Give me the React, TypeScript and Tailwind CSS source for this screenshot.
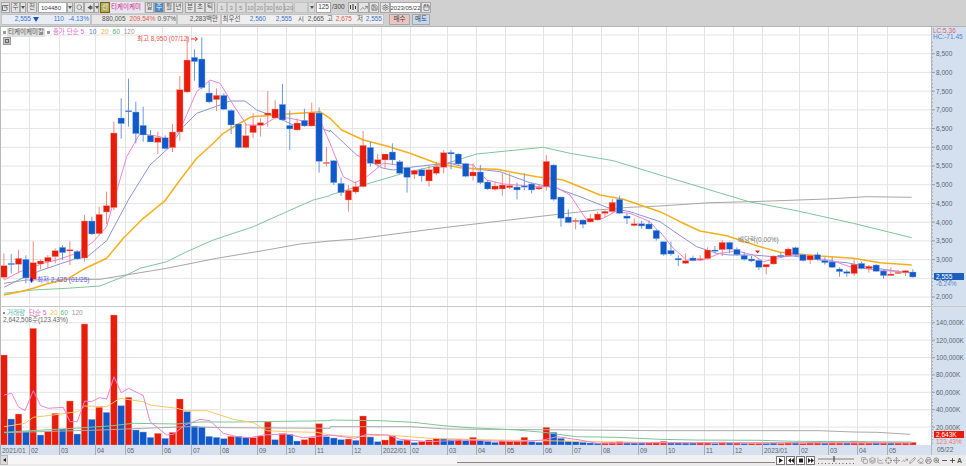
import React from "react";
import { Search, Save, Settings, Calendar, Copy, Layers, LineChart, Crosshair, Pencil, Minus, Plus, ZoomIn, Printer, Move, TrendingUp, Eraser } from "lucide-react";

type P = [number, number];
const z3 = (a: P[]): P[] => a.map(([x, y]) => [x / 3, 30 + y / 3]);
const z4 = (a: P[]): P[] => a.map(([x, y]) => [330 + x / 3, 130 + y / 3]);
const z5 = (a: P[]): P[] => a.map(([x, y]) => [660 + x / 3, 190 + y / 3]);
const z6 = (a: P[]): P[] => a.map(([x, y]) => [x / 3, 300 + y / 3]);
const z7 = (a: P[]): P[] => a.map(([x, y]) => [330 + x / 3, 380 + y / 3]);
const z8 = (a: P[]): P[] => a.map(([x, y]) => [660 + x / 3, 380 + y / 3]);
const pts = (a: P[]) => a.map(([x, y]) => `${x.toFixed(1)},${y.toFixed(1)}`).join(" ");

// type, body top, body bottom, wick top, wick bottom (zoom px)
type C = [string, number, number, number, number];
const A: C[] = [["r",707,742,670,748],["b",700,704,672,730],["r",685,703,660,730],["b",688,744,676,760],["r",698,748,634,755],["r",693,702,688,718],["r",682,695,675,715],["r",662,680,655,700],["b",652,668,646,690],["r",659,663,634,705],["b",664,687,660,690],["r",573,684,555,695],["b",573,612,560,615],["r",553,611,530,615],["r",527,546,485,582],["r",309,533,275,540],["b",264,281,205,326],["b",242,245,146,290],["b",246,311,215,340],["b",286,315,230,335],["b",316,336,300,336],["r",323,337,305,372],["b",323,356,316,358],["r",306,353,282,366],["r",179,306,138,332],["r",90,186,20,190],["b",82,95,58,152],["b",87,173,22,178],["b",189,216,155,220],["r",196,209,175,243],["b",196,238,190,240],["b",241,285,238,312],["b",282,353,280,355],["r",317,353,280,355],["r",286,308,250,325],["r",278,286,265,320],["r",249,255,183,290],["r",237,264,210,268],["b",223,270,162,272],["b",286,297,242,360],["r",279,300,265,302],["b",271,288,236,290],["r",248,288,218,290],["b",249,394,232,428],["r",397,400,350,410]];
const B: C[] = [["b",92,158,90,165],["b",160,188,142,198],["r",181,210,165,245],["r",170,186,155,192],["r",46,170,3,172],["b",52,100,35,110],["r",89,102,72,110],["r",72,90,72,115],["b",66,90,40,105],["b",95,130,90,132],["b",113,142,110,188],["r",121,133,118,147],["b",119,138,115,155],["r",119,153,105,170],["r",110,130,95,135],["r",68,112,60,130],["b",67,72,60,118],["b",72,102,70,105],["b",101,139,98,142],["r",126,138,100,152],["b",126,158,105,162],["b",156,177,150,180],["r",168,178,155,182],["r",165,177,130,197],["r",167,173,130,178],["b",171,180,158,208],["b",168,171,130,180],["b",162,180,158,190],["r",172,177,165,180],["r",94,170,75,182],["b",105,208,103,212],["b",201,265,200,290],["b",261,278,238,280],["r",271,275,265,298],["b",270,283,268,295],["r",265,276,252,278],["r",252,270,245,272],["r",244,250,240,262],["r",217,245,207,248],["b",208,250,197,252],["b",258,265,250,282],["r",281,287,265,289],["b",281,288,273,296],["b",282,297,272,298],["b",301,326,298,332]];
const D: C[] = [["b",155,193,155,197],["b",181,192,155,197],["b",205,210,196,228],["r",212,220,190,222],["b",204,212,197,214],["r",206,209,196,214],["r",180,206,172,208],["b",180,182,168,190],["r",157,179,150,198],["b",157,178,155,190],["b",178,194,172,197],["b",196,208,186,212],["b",207,213,198,216],["b",211,232,208,240],["r",223,231,222,253],["r",198,222,196,224],["b",196,199,186,202],["r",177,197,172,200],["b",173,194,170,197],["b",194,212,192,214],["r",196,210,194,222],["b",194,209,187,212],["b",212,218,202,224],["b",216,232,202,234],["b",237,245,232,260],["b",245,250,240,260],["r",223,251,208,258],["b",220,236,215,238],["r",229,236,225,248],["b",225,244,222,246],["b",243,257,240,266],["r",252,257,232,258],["r",247,250,240,252],["r",242,248,240,258],["b",246,261,238,263]];
const toY = (v: number, i: number) => (i < 45 ? 30 + v / 3 : i < 90 ? 130 + v / 3 : 190 + v / 3);
const candles = [...A, ...B, ...D];
const cx = (i: number) => 3.9 + 7.33 * i;

const volA: [string, number][] = [["r",165],["b",357],["r",342],["b",395],["r",85],["b",405],["r",393],["r",340],["b",387],["r",303],["b",402],["r",72],["b",358],["r",322],["b",337],["r",45],["b",317],["r",292],["b",390],["b",396],["b",412],["r",400],["b",415],["r",397],["r",297],["b",335],["b",378],["b",381],["b",409],["b",412],["b",416],["r",409],["b",409],["b",413],["r",413],["r",408],["r",366],["b",419],["r",401],["b",403],["b",423],["r",419],["r",413],["r",371],["b",410]];
const volB: [string, number][] = [["b",174],["b",179],["r",177],["b",181],["r",108],["b",171],["b",185],["r",180],["r",168],["b",182],["r",180],["b",188],["r",185],["r",180],["r",174],["b",177],["b",179],["r",178],["b",182],["r",172],["b",181],["b",184],["b",187],["r",182],["r",182],["r",182],["r",172],["b",185],["b",187],["r",142],["b",157],["b",175],["b",184],["b",185],["b",187],["b",189],["b",189],["r",188],["r",187],["r",185],["b",187],["b",189],["b",189],["r",189],["r",186]];
const volD: [string, number][] = [["r",184],["b",188],["b",188],["b",189],["b",189],["r",188],["r",188],["b",190],["r",186],["b",188],["r",189],["b",190],["r",190],["r",190],["b",190],["b",189],["r",190],["r",187],["b",187],["r",190],["r",186],["r",186],["b",189],["r",185],["r",186],["b",187],["r",183],["r",185],["r",188],["b",186],["r",187],["b",187],["r",187],["r",187],["r",187]];
const vols = [...volA.map(([t, v]) => [t, 300 + v / 3] as [string, number]), ...[...volB, ...volD].map(([t, v]) => [t, 380 + v / 3] as [string, number])];

const ma5 = [...z3([[12,750],[60,725],[130,700],[170,690],[230,670],[280,635],[320,590],[345,500],[380,380],[420,310],[480,320],[510,335],[540,300],[590,185],[630,150],[660,160],[700,225],[740,285],[790,285],[830,260],[870,265],[920,275],[960,270],[990,340]]),
  ...z4([[0,40],[40,140],[75,158],[110,140],[160,100],[210,105],[240,125],[300,125],[340,100],[380,100],[430,105],[470,150],[520,162],[600,168],[640,170],[675,170],[720,195],[770,270],[820,265],[855,245],[900,250],[960,275],[990,310]]),
  ...z5([[0,125],[40,175],[80,210],[130,210],[180,190],[230,183],[280,195],[310,215],[350,205],[400,195],[470,205],[520,213],[570,230],[650,240],[720,245],[755,248]])];
const ma10 = [...z3([[12,772],[60,748],[120,722],[230,685],[260,682],[320,632],[385,510],[450,405],[510,350],[550,290],[590,250],[660,225],[690,213],[735,213],[770,240],[830,262],[880,285],[930,280],[990,305]]),
  ...z4([[0,0],[80,75],[160,115],[190,120],[240,112],[300,105],[360,100],[420,115],[510,125],[600,158],[680,175],[750,200],[830,232],[900,245],[990,275]]),
  ...z5([[0,95],[50,130],[110,170],[170,190],[210,195],[280,195],[340,200],[400,198],[500,213],[560,218],[650,235],[755,250]])];
const ma20 = [...z3([[12,795],[60,785],[100,775],[140,762],[200,748],[250,718],[320,685],[370,625],[430,565],[495,512],[540,450],[590,385],[640,340],[670,310],[710,285],[755,260],[800,257],[860,252],[920,248],[960,245],[990,265]]),
  ...z4([[35,0],[100,30],[170,48],[240,70],[320,100],[400,115],[500,118],[620,140],[700,150],[810,195],[880,208],[990,245]]),
  ...z5([[0,65],[60,95],[120,123],[200,137],[300,170],[360,187],[480,198],[580,205],[660,218],[755,225]])];
const ma60 = [...z3([[12,790],[100,780],[200,775],[300,768],[370,740],[420,715],[500,695],[560,665],[640,630],[760,590],[860,545],[940,510],[990,497]]),
  ...z4([[0,195],[100,165],[220,130],[350,100],[440,72],[640,52],[720,70],[850,92],[990,135]]),
  ...z5([[150,0],[270,36],[400,60],[580,100],[755,143]])];
const ma120 = [...z3([[12,760],[80,750],[300,748],[360,738],[500,715],[650,685],[800,660],[900,642],[990,633]]),
  ...z4([[70,328],[350,292],[640,258],[800,240],[900,232],[990,228]]),
  ...z5([[150,38],[270,35],[500,27],[620,20],[755,22]])];

const v5 = [...z6([[12,285],[35,280],[55,320],[75,332],[100,272],[122,317],[145,325],[190,322],[210,365],[232,365],[254,303],[275,305],[298,293],[320,297],[342,230],[364,278],[386,265],[430,287],[450,365],[500,405],[520,403],[555,375],[600,358],[630,362],[670,400],[710,410],[750,413],[790,405],[860,402],[910,413],[990,405]]),
  ...z7([[0,165],[75,175],[110,163],[175,165],[210,178],[300,185],[400,180],[560,185],[640,180],[680,170],[750,180],[800,190],[990,188]]), ...z8([[755,189]])];
const v20 = [...z6([[12,380],[75,370],[100,352],[160,345],[232,335],[254,318],[320,320],[360,295],[430,305],[450,315],[530,325],[560,332],[620,332],[700,358],[760,368],[800,392],[860,395],[950,397],[990,405]]),
  ...z7([[0,165],[80,170],[170,165],[300,175],[500,180],[640,182],[990,188]]), ...z8([[755,188]])];
const v60 = [...z6([[12,397],[90,392],[170,388],[330,378],[400,370],[530,372],[600,366],[700,366],[990,362]]),
  ...z7([[0,120],[150,122],[250,127],[340,137],[420,143],[500,147],[560,150],[640,157],[740,170],[860,172],[990,178]]),
  ...z8([[100,180],[300,181],[400,184],[755,186]])];
const v120 = [...z6([[12,398],[300,390],[560,380],[680,383],[990,385]]),
  ...z7([[0,140],[240,140],[350,147],[740,150],[990,152]]),
  ...z8([[480,152],[580,156],[650,157],[750,163]])];

const ticks: [number, string][] = [[0,"2021/01"],[29,"02"],[59,"03"],[95,"04"],[125,"05"],[162,"06"],[191,"07"],[220,"08"],[257,"09"],[286,"10"],[315,"11"],[352,"12"],[381,"2022/01"],[410,"02"],[447,"03"],[476,"04"],[505,"05"],[543,"06"],[572,"07"],[601,"08"],[638,"09"],[666,"10"],[704,"11"],[733,"12"],[762,"2023/01"],[799,"02"],[828,"03"],[857,"04"],[887,"05"]];
const priceLabels = [8500,8000,7500,7000,6500,6000,5500,5000,4500,4000,3500,3000,2500,2000];
const priceY = (p: number) => 53.7 + (8500 - p) * 18.72 / 500;
const fmt = (n: number) => n.toLocaleString("en-US");
const volY = (k: number) => 444.5 - k * 17.4 / 20;
const SANS = "font-['Liberation_Sans','Noto_Sans_CJK_KR',sans-serif]";

function Btn({ w, children, active, tone }: { w: string; children?: React.ReactNode; active?: boolean; tone?: string }) {
  return (
    <div className={`${w} h-[11px] shrink-0 flex items-center justify-center border border-[#a8a8a8] ${active ? "bg-[#4a8ac4] text-white" : tone ?? "bg-[#e4e4e4] text-[#555]"}`}>
      {children}
    </div>
  );
}

const Caret = () => <span className="block w-0 h-0 border-l-[2px] border-r-[2px] border-t-[3px] border-l-transparent border-r-transparent border-t-[#555]" />;

function Toolbar() {
  return (
    <div className={`h-[27px] shrink-0 bg-[#d0d0d0] border-b border-[#b4b4b4] pt-[2px] pl-[1px] flex flex-col gap-[1px] text-[6.5px] leading-none ${SANS}`}>
      <div className="flex items-center h-[11px]">
        <Btn w="w-[9px]">
          <svg width="7" height="7" viewBox="0 0 7 7"><path d="M0.5 1.5h6M0.5 1.5v5h4M2 3h3v3" fill="none" stroke="#555" strokeWidth="0.8" /></svg>
        </Btn>
        <div className="w-[1px]" />
        <Btn w="w-[9px]">주</Btn>
        <Btn w="w-[6px]"><Caret /></Btn>
        <Btn w="w-[10px] ml-[1px]">전</Btn>
        <div className="w-[29px] h-[11px] ml-[1px] bg-white border border-[#a8a8a8] text-[#444] text-[6px] flex items-center pl-[2px]">104480</div>
        <Btn w="w-[6px]"><Caret /></Btn>
        <Btn w="w-[10px] ml-[1px]"><Search size={7} color="#666" /></Btn>
        <Btn w="w-[10px]"><svg width="7" height="7" viewBox="0 0 7 7"><path d="M5 1L1.5 3.5 5 6z" fill="#555" /><rect x="5.2" y="2" width="1.2" height="3" fill="#555" /></svg></Btn>
        <Btn w="w-[5px]"><Caret /></Btn>
        <div className="w-[10px] h-[11px] ml-[1px] bg-[#a6b34e] border border-[#8a5a1c] text-[#eef] flex items-center justify-center">선</div>
        <div className="w-[34px] h-[11px] pl-[1px] bg-[#e8e4f0] text-[#c8208a] flex items-center whitespace-nowrap">티케이케미</div>
        <Btn w="w-[9px] ml-[1px]">일</Btn>
        <Btn w="w-[10px]" active>주</Btn>
        <Btn w="w-[10px]">월</Btn>
        <Btn w="w-[9px]">년</Btn>
        <Btn w="w-[10px] ml-[2px]">분</Btn>
        <Btn w="w-[10px]">초</Btn>
        <Btn w="w-[10px]">틱</Btn>
        <div className="w-[2px]" />
        {["1","3","5","10","20","30","60","120"].map((t) => (
          <div key={t} className="w-[9.5px] h-[11px] shrink-0 flex items-center justify-center border border-[#bdbdbd] bg-[#dcdcdc] text-[#8a8a8a] text-[6px] whitespace-nowrap">{t}</div>
        ))}
        <div className="w-[14px] h-[11px] bg-[#dadada] border border-[#c2c2c2] ml-[1px]" />
        <div className="w-[7px] h-[11px] bg-[#dadada] border border-[#c2c2c2] flex items-center justify-center"><Caret /></div>
        <div className="w-[15px] h-[11px] ml-[1px] bg-white border border-[#a8a8a8] text-[#444] flex items-center justify-end pr-[1px]">125</div>
        <div className="w-[16px] text-[#444] pl-[1px]">/300</div>
        <Btn w="w-[10px] ml-[1px]"><svg width="8" height="7" viewBox="0 0 8 7"><path d="M1.5 1v4M4 0v6M6.5 2v3" stroke="#333" strokeWidth="1" /></svg></Btn>
        <Btn w="w-[11px]"><TrendingUp size={8} color="#666" /></Btn>
        <Btn w="w-[10px]"><Save size={7} color="#555" /></Btn>
        <Btn w="w-[10px] ml-[1px]"><Settings size={7} color="#555" /></Btn>
        <div className="w-[31px] h-[11px] bg-white border border-[#a8a8a8] text-[#444] text-[6px] flex items-center justify-center whitespace-nowrap">2023/05/22</div>
        <Btn w="w-[10px]"><Calendar size={7} color="#555" /></Btn>
      </div>
      <div className="flex items-center h-[11px] text-[#555]">
        <div className="w-[90px] h-[11px] bg-[#e7eef8] border border-[#c4c4c4] flex items-center text-[#3f6fc8]">
          <span className="w-[17px] ml-[12px] text-right whitespace-nowrap">2,555</span>
          <span className="block w-0 h-0 ml-[2px] border-l-[3px] border-r-[3px] border-t-[5px] border-l-transparent border-r-transparent border-t-[#1f55b8]" />
          <span className="w-[25px] text-right">110</span>
          <span className="w-[25px] text-right">-4.13%</span>
        </div>
        <div className="w-[86px] h-[11px] bg-[#e8e8e8] border border-[#c4c4c4] flex items-center">
          <span className="w-[34px] text-right">880,005</span>
          <span className="w-[30px] text-right text-[#e05a50]">209.54%</span>
          <span className="w-[21px] text-right">0.97%</span>
        </div>
        <div className="w-[44px] h-[11px] bg-[#e8e8e8] border border-[#c4c4c4] flex items-center justify-end pr-[2px] whitespace-nowrap">2,283백만</div>
        <div className="w-[163px] h-[11px] bg-[#efefef] border border-[#c4c4c4] flex items-center">
          <span className="w-[19px] text-center">최우선</span>
          <span className="w-[25px] text-right text-[#3f6fc8]">2,560</span>
          <span className="w-[26px] text-right text-[#3f6fc8]">2,555</span>
          <span className="w-[12px] text-right">시</span>
          <span className="w-[20px] text-right">2,665</span>
          <span className="w-[9px] text-right">고</span>
          <span className="w-[19px] text-right text-[#e05a50]">2,675</span>
          <span className="w-[11px] text-right">저</span>
          <span className="w-[19px] text-right text-[#3f6fc8]">2,555</span>
        </div>
        <div className="w-[5px]" />
        <div className="w-[21px] h-[11px] bg-[#ecc4c0] border border-[#a8a8a8] text-[#444] flex items-center justify-center">매수</div>
        <div className="w-[2px]" />
        <div className="w-[18px] h-[11px] bg-[#c2d9f2] border border-[#a8a8a8] text-[#444] flex items-center justify-center">매도</div>
      </div>
    </div>
  );
}

function Grid({ top, bottom, ys }: { top: number; bottom: number; ys: number[] }) {
  return (
    <g stroke="#e4e4e4" strokeWidth="1">
      {ticks.slice(1).map(([x]) => <line key={x} x1={x + 0.5} x2={x + 0.5} y1={top} y2={bottom} />)}
      {ys.map((y) => <line key={y} x1={0} x2={931} y1={y} y2={y} />)}
    </g>
  );
}

function Line({ p, c, w = 1 }: { p: P[]; c: string; w?: number }) {
  return <polyline points={pts(p)} fill="none" stroke={c} strokeWidth={w} strokeLinejoin="round" />;
}

function MainChart() {
  const ys = [35, ...priceLabels.map(priceY)];
  return (
    <div className="h-[279px] shrink-0 flex">
      <div className="relative flex-1 border-l border-[#b8b8b8]">
        <svg className="block" width="930" height="279" viewBox="1 27 930 279" fontFamily="'Liberation Sans','Noto Sans CJK KR',sans-serif">
          <Grid top={27} bottom={306} ys={ys} />
          <Line p={ma120} c="#a9a6a4" />
          <Line p={ma60} c="#7fc698" />
          <Line p={ma10} c="#8b94d8" />
          <Line p={ma5} c="#ee82d6" />
          <Line p={ma20} c="#f5b01c" w={1.5} />
          {candles.map(([t, a, b, h, l], i) => {
            const x = cx(i);
            const col = t === "r" ? "#e81c0a" : "#1159c8";
            return (
              <g key={i}>
                <line x1={x} x2={x} y1={toY(h, i)} y2={toY(l, i)} stroke={t === "r" ? "#f08a80" : "#6a98e0"} strokeWidth="1" />
                <rect x={x - 3.2} y={toY(a, i)} width="6.4" height={Math.max(1.2, (b - a) / 3)} fill={col} stroke={t === "r" ? "#f5a9a0" : "#9cbcec"} strokeWidth="0.4" />
              </g>
            );
          })}
          <text x="137" y="41" fontSize="6.5" fill="#f0524a">최고 8,950 (07/12)</text>
          <path d="M191 39h6M195 37l2.5 2-2.5 2" fill="none" stroke="#e8201a" strokeWidth="0.9" />
          <text x="37" y="282" fontSize="6.5" fill="#5a5af0">최저 2,425 (01/25)</text>
          <path d="M31.5 277.5l2 3h-1.2v2h-1.6v-2h-1.2z" fill="#1111ee" />
          <text x="738" y="242" fontSize="6.5" fill="#777">배당락(0.00%)</text>
          <path d="M755 250.5h5l-2.5 3z" fill="#e8201a" />
        </svg>
        <div className={`absolute left-[2px] top-[1px] flex items-center text-[6.5px] leading-none whitespace-nowrap ${SANS}`}>
          <span className="w-[3px] h-[3px] bg-[#999] mr-[1px]" />
          <span className="bg-[#e0e0e0] text-[#555] px-[1px] h-[9px] flex items-center">티케이케미칼</span>
          <span className="w-[3px] h-[3px] bg-[#999] ml-[2px] mr-[3px]" />
          <span className="text-[#ea66cc]">종가 단순 5</span>
          <span className="text-[#5a78d8] ml-[5px]">10</span>
          <span className="text-[#f0b030] ml-[5px]">20</span>
          <span className="text-[#45b070] ml-[4px]">60</span>
          <span className="text-[#999] ml-[4px]">120</span>
        </div>
        <div className="absolute left-[2px] top-[10px] w-[8px] h-[8px] bg-[#c4c4c4] border border-[#999] flex items-center justify-center">
          <span className="w-[4px] h-[4px] border border-[#666]" />
        </div>
      </div>
      <div className="w-[35px] shrink-0 bg-[#d4e0ee] border-l border-[#b0b8c4]">
        <svg className="block" width="34" height="279" viewBox="932 27 34 279" fontFamily="'Liberation Sans',sans-serif">
          <text x="933" y="33" fontSize="6.5" fill="#e8605c">LC:5.36</text>
          <text x="933" y="39" fontSize="6.5" fill="#4a86e0">HC:-71.45</text>
          <line x1="932.5" x2="932.5" y1="42" y2="306" stroke="#9aa3ad" strokeWidth="1" strokeDasharray="1 2.74" />
          {priceLabels.map((p) => (
            <g key={p}>
              <line x1="932" x2="935" y1={priceY(p)} y2={priceY(p)} stroke="#8a8f96" strokeWidth="0.8" />
              <text x="936" y={priceY(p) + 2.4} fontSize="6.5" fill="#5e6670">{fmt(p)}</text>
            </g>
          ))}
          <rect x="934" y="273" width="30" height="7" fill="#1c5fc0" />
          <text x="936" y="279" fontSize="6.5" fill="#fff">2,555</text>
          <text x="936" y="286" fontSize="6.5" fill="#5a8ad8">-6.24%</text>
        </svg>
      </div>
    </div>
  );
}

function VolumeChart() {
  const keys = [20, 40, 60, 80, 100, 120, 140];
  return (
    <div className="h-[139px] shrink-0 flex border-t border-[#c8c8c8]">
      <div className="relative flex-1 border-l border-[#b8b8b8]">
        <svg className="block" width="930" height="138" viewBox="1 307 930 138">
          <Grid top={307} bottom={445} ys={keys.map(volY)} />
          {vols.map(([t, y], i) => (
            <rect key={i} x={cx(i) - 3.3} y={y} width="6.6" height={Math.max(0.8, 445 - y)} fill={t === "r" ? "#e81c0a" : "#1159c8"} stroke={t === "r" ? "#f5a9a0" : "#9cbcec"} strokeWidth="0.4" />
          ))}
          <Line p={v120} c="#aaaaaa" />
          <Line p={v60} c="#7cc795" />
          <Line p={v20} c="#f7c766" />
          <Line p={v5} c="#ee82d8" />
        </svg>
        <div className={`absolute left-[2px] top-[2px] text-[6.5px] leading-[7px] whitespace-nowrap ${SANS}`}>
          <div className="flex items-center">
            <span className="w-[2px] h-[2px] bg-[#888] mr-[2px]" />
            <span className="text-[#58b8b4]">거래량</span>
            <span className="text-[#ea66cc] ml-[4px]">단순 5</span>
            <span className="text-[#f0c050] ml-[4px]">20</span>
            <span className="text-[#55b880] ml-[3px]">60</span>
            <span className="text-[#999] ml-[4px]">120</span>
          </div>
          <div className="text-[#666]">2,642,508주(123.43%)</div>
        </div>
      </div>
      <div className="w-[35px] shrink-0 bg-[#d4e0ee] border-l border-[#b0b8c4]">
        <svg className="block" width="34" height="138" viewBox="932 307 34 138" fontFamily="'Liberation Sans',sans-serif">
          <line x1="932.5" x2="932.5" y1="310" y2="445" stroke="#9aa3ad" strokeWidth="1" strokeDasharray="1 2.4" />
          {keys.map((k) => (
            <g key={k}>
              <line x1="932" x2="935" y1={volY(k)} y2={volY(k)} stroke="#8a8f96" strokeWidth="0.8" />
              <text x="936" y={volY(k) + 2.4} fontSize="6.5" fill="#5e6670">{fmt(k * 1000)}K</text>
            </g>
          ))}
          <rect x="934" y="431" width="30" height="7" fill="#e81c0a" />
          <text x="936" y="437" fontSize="6.5" fill="#fff">2,643K</text>
          <text x="936" y="444" fontSize="6.5" fill="#ee7a70">123.43%</text>
        </svg>
      </div>
    </div>
  );
}

function DateRow() {
  return (
    <div className="h-[10px] shrink-0 flex bg-[#d6e0ee]">
      <svg className="block" width="931" height="10" viewBox="0 445 931 10" fontFamily="'Liberation Sans',sans-serif">
        {ticks.map(([x, t]) => (
          <g key={x}>
            <line x1={x + 0.5} x2={x + 0.5} y1="445" y2="455" stroke="#9aa0a8" strokeWidth="0.8" />
            <text x={x + 2} y="453" fontSize="6.5" fill="#5e6670">{t}</text>
          </g>
        ))}
      </svg>
      <div className={`flex-1 border-l border-[#b0b8c4] pl-[5px] text-[6.5px] leading-[10px] text-[#5e6670] ${SANS}`}>05/22</div>
    </div>
  );
}

function Ctl({ d }: { d: string }) {
  return (
    <div className="w-[9px] h-[9px] shrink-0 bg-white border border-[#777] flex items-center justify-center">
      <svg width="6" height="5" viewBox="0 0 6 5"><path d={d} fill="#222" /></svg>
    </div>
  );
}

function BottomBar() {
  const icons = [Copy, Layers, LineChart, Crosshair, Move, TrendingUp, Pencil, Eraser, Printer];
  return (
    <div className="flex-1 flex bg-[#ebebeb] relative min-h-0">
      <div className="w-[8px] shrink-0 h-[10px] bg-[#dcdcdc] border border-[#bbb] flex items-center justify-center">
        <span className="block w-0 h-0 border-t-[2px] border-b-[2px] border-r-[3px] border-t-transparent border-b-transparent border-r-[#222]" />
      </div>
      <div className="w-[449px] shrink-0 h-[9px] bg-[#f6f6f6]" />
      <div className="w-[318px] shrink-0 h-[8px] bg-[#f1f1f1] border-b border-[#888]" />
      <div className="flex items-center h-[10px] gap-[1px] pl-[1px] text-[#666]">
        <Ctl d="M1 0l4 2.5-4 2.5z" />
        <Ctl d="M0 2.5L3 0v5zM3 2.5L6 0v5z" />
        <Ctl d="M1 0.5h4v4h-4z" />
        <Ctl d="M0 0l3 2.5L0 5zM3 0l3 2.5L3 5z" />
        <svg className="shrink-0 ml-[2px]" width="36" height="9" viewBox="0 0 36 9">
          <line x1="0" x2="36" y1="3" y2="3" stroke="#666" strokeWidth="0.8" />
          <line x1="0" x2="36" y1="7.5" y2="7.5" stroke="#666" strokeWidth="1" strokeDasharray="1 2.5" />
          <line x1="16" x2="16" y1="0" y2="6" stroke="#444" strokeWidth="1.2" />
        </svg>
        <div className="w-[5px]" />
        {icons.map((I, k) => <I key={k} size={7} color="#777" strokeWidth={2} className="shrink-0" />)}
        <ZoomIn size={7} color="#555" className="shrink-0" />
        <Minus size={7} color="#444" strokeWidth={3} className="shrink-0" />
        <Plus size={7} color="#444" strokeWidth={3} className="shrink-0" />
        <span className={`text-[7px] leading-none font-bold text-[#555] ${SANS}`}>A</span>
      </div>
    </div>
  );
}

export default function App() {
  return (
    <div className="w-[966px] h-[466px] overflow-hidden flex flex-col bg-white">
      <Toolbar />
      <MainChart />
      <VolumeChart />
      <DateRow />
      <BottomBar />
    </div>
  );
}
